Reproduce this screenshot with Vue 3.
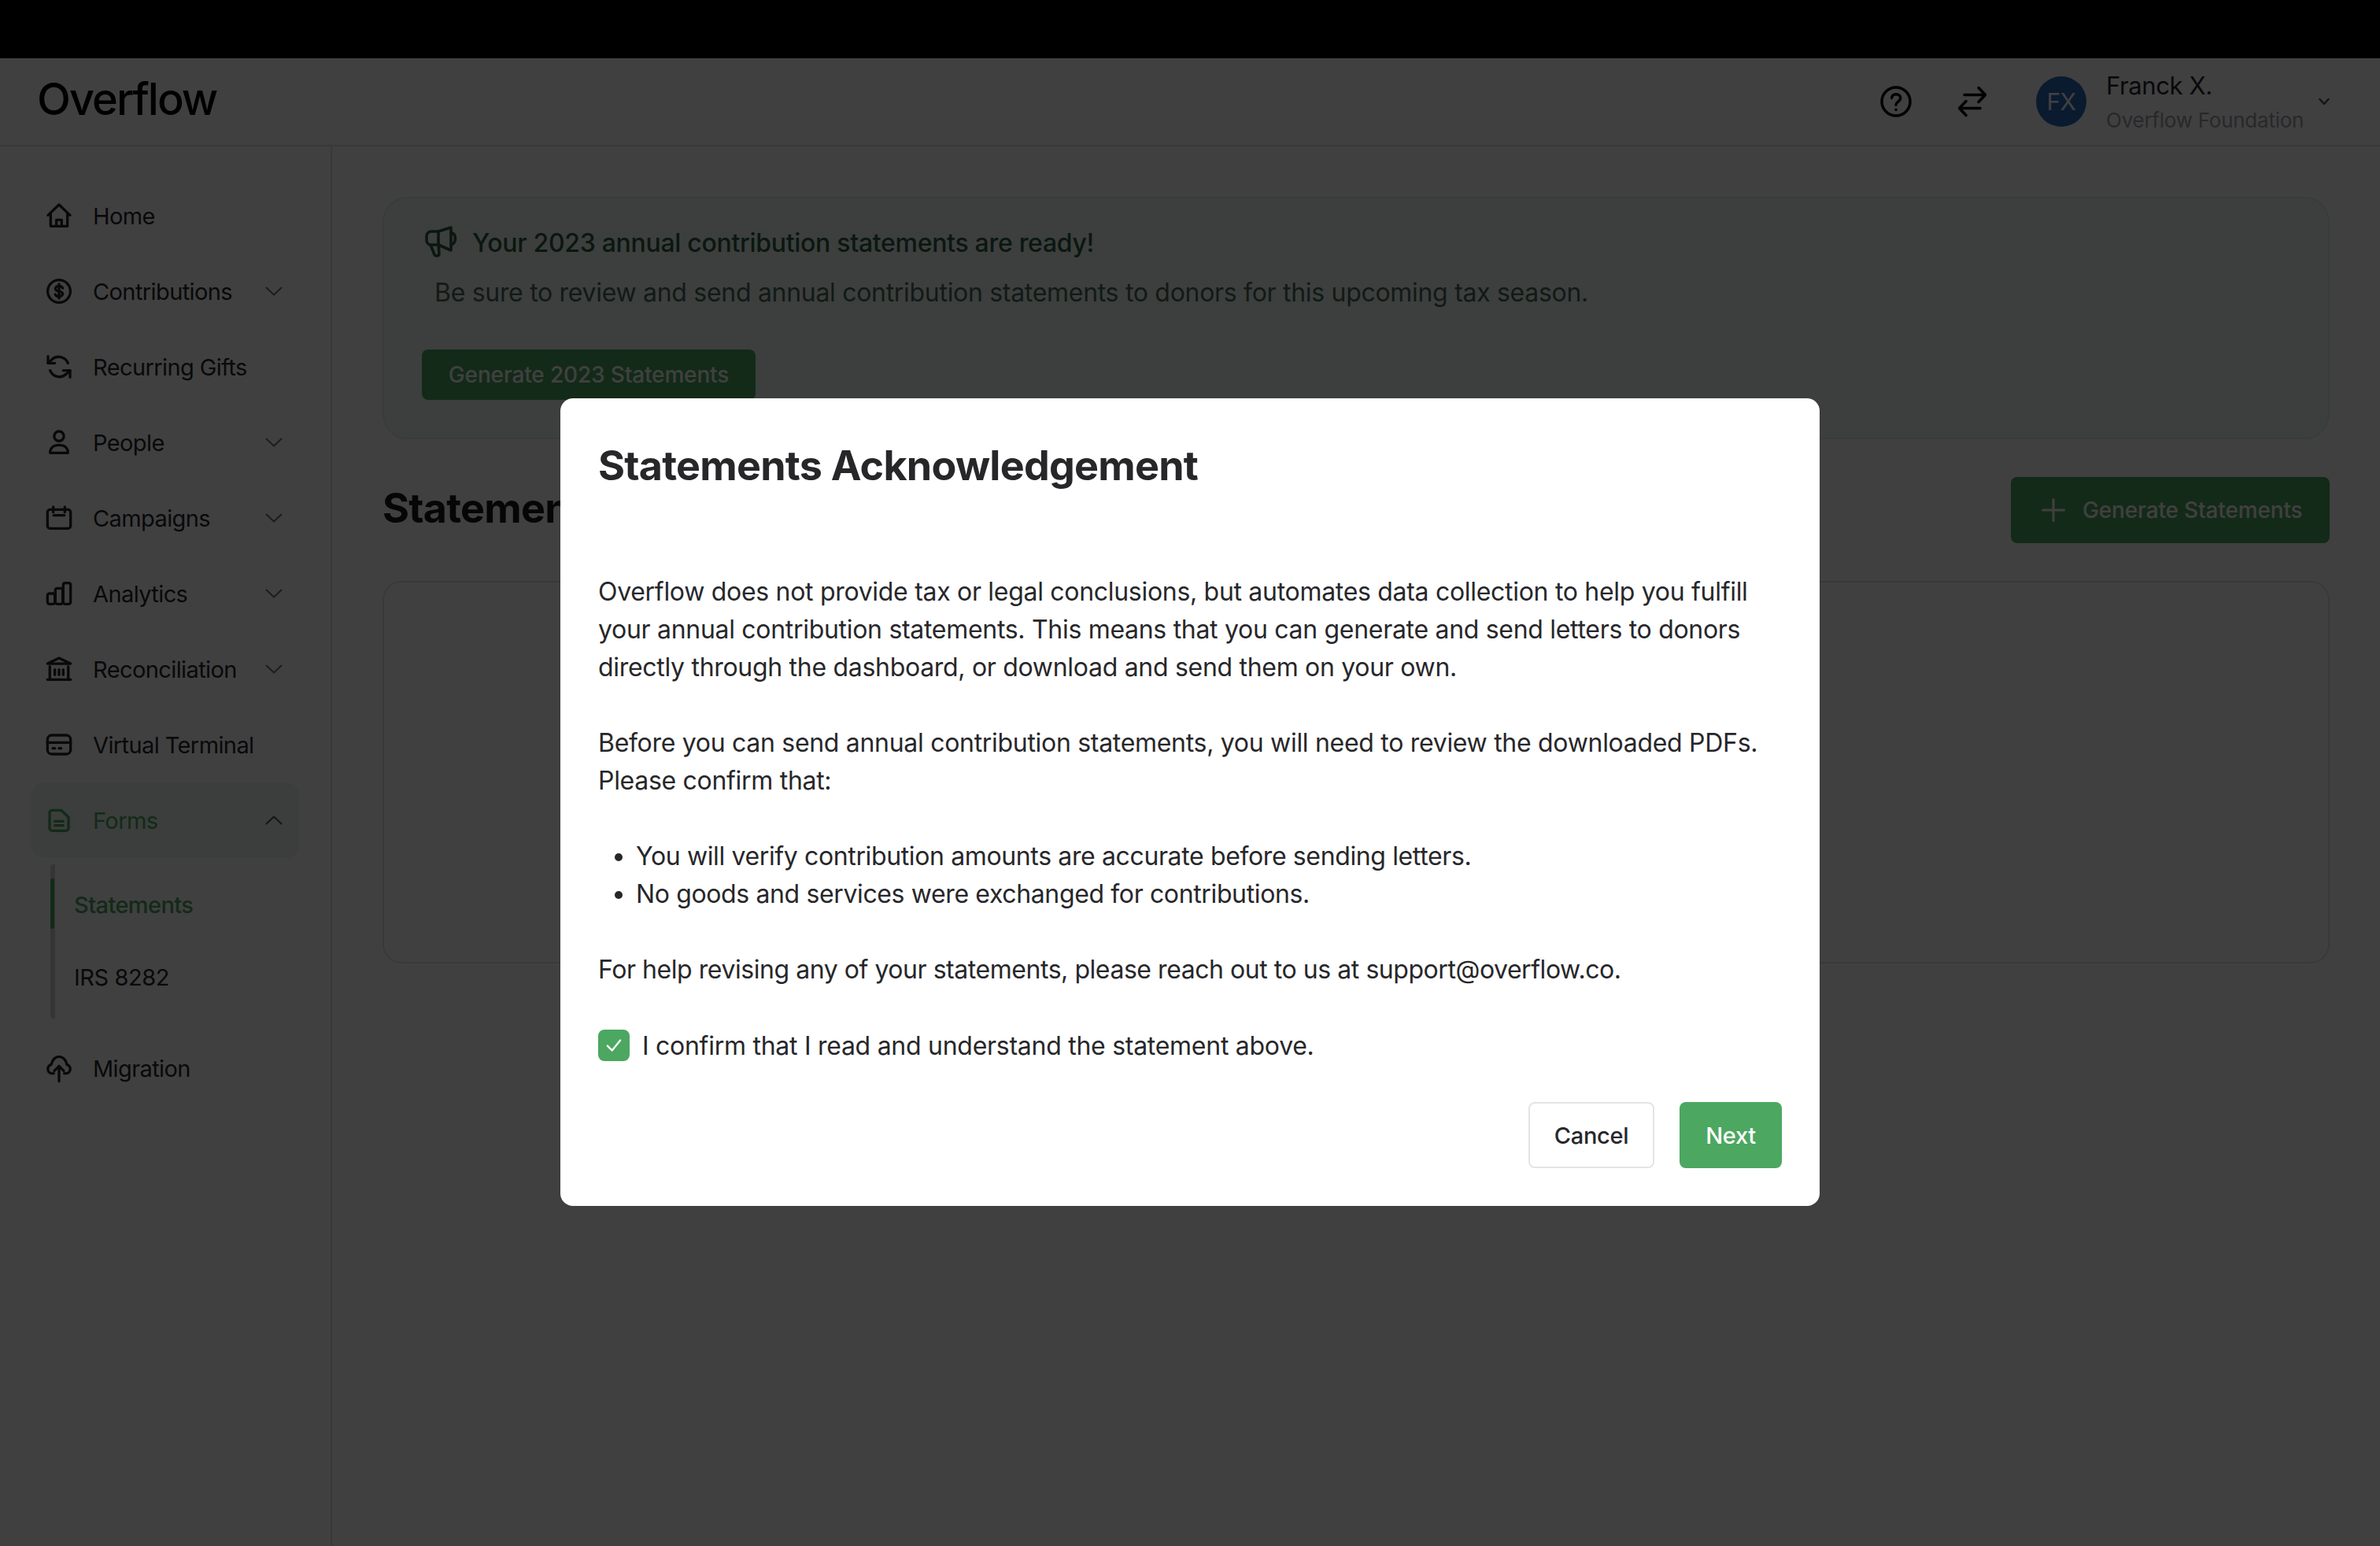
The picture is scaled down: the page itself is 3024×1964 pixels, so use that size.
<script setup>
const rr = (x, y, w, h, r) =>
  `M${x + r} ${y}H${x + w - r}a${r} ${r} 0 0 1 ${r} ${r}V${y + h - r}a${r} ${r} 0 0 1 -${r} ${r}H${x + r}a${r} ${r} 0 0 1 -${r} -${r}V${y + r}a${r} ${r} 0 0 1 ${r} -${r}Z`

const icons = {
  home: ['M1.500 11.500 12 1.500l10.500 10', 'M4 9.500V22h16V9.500', 'M9.500 22v-6h5v6'],
  dollar: ['M12 1.200a10.800 10.800 0 1 0 0 21.600a10.800 10.800 0 1 0 0-21.600Z', 'M15.500 9c-.6-1.300-2-2-3.500-2-2 0-3.500 1-3.500 2.500 0 3.400 7 1.600 7 5 0 1.500-1.600 2.500-3.500 2.500-1.600 0-3-.7-3.600-2', 'M12 5.200v13.600'],
  recurring: ['M1.500 2v6.500H8', 'M22.500 22v-6.500H16', 'M20.500 8.500A9.500 9.500 0 0 0 5 5.200L1.500 8.500', 'M22.500 15.500 19 18.800a9.500 9.500 0 0 1-15.500-3.300'],
  user: ['M12 1.500a4.600 4.600 0 1 0 0 9.200a4.600 4.600 0 1 0 0-9.200Z', 'M3.500 22c0-5 3.500-7.500 8.500-7.500s8.500 2.500 8.500 7.500Z'],
  calendar: [rr(1, 4, 22, 18, 2.5), 'M6.500 1.500v5', 'M17.500 1.500v5', 'M7 9.500h10'],
  analytics: [rr(1, 12, 7, 10, 1.8), rr(8.5, 7, 7, 15, 1.8), rr(16, 2, 7, 20, 1.8)],
  bank: ['M1 6.800 12 1.500l11 5.300Z', 'M3.200 9.500V21', 'M20.800 9.500V21', 'M1 22h22', 'M8 12.500v5', 'M12 12.500v5', 'M16 12.500v5'],
  card: [rr(1, 3, 22, 18, 4), 'M1 10h22', 'M6 15.500h2', 'M12 15.500h2'],
  doc: ['M3 5a2.500 2.500 0 0 1 2.500-2.500H14l7 6.500V19.500a2.500 2.500 0 0 1-2.500 2.500h-13A2.500 2.500 0 0 1 3 19.500Z', 'M8 13h8', 'M8 17h8'],
  cloud: ['M7 17H5C.5 16.500 0 10 4.500 8.500 6 3.500 9 1 12 1s6.500 2.500 7.500 7.500c4.500 1.500 4 8-.5 8.500H17', 'M12 24.500V10', 'M7.500 14.500 12 10l4.500 4.500'],
}

const nav = [
  { label: 'Home', icon: 'home' },
  { label: 'Contributions', icon: 'dollar', chevron: true },
  { label: 'Recurring Gifts', icon: 'recurring' },
  { label: 'People', icon: 'user', chevron: true },
  { label: 'Campaigns', icon: 'calendar', chevron: true },
  { label: 'Analytics', icon: 'analytics', chevron: true },
  { label: 'Reconciliation', icon: 'bank', chevron: true },
  { label: 'Virtual Terminal', icon: 'card' },
  { label: 'Forms', icon: 'doc', chevron: true, open: true },
]
</script>

<template>
  <div class="page">
    <div class="topbar"></div>
    <header class="header">
      <div class="logo">Overflow</div>
      <div class="account">
        <svg class="help" viewBox="0 0 40 40" fill="none" stroke="currentColor" stroke-width="3.500" stroke-linecap="round" stroke-linejoin="round">
          <circle cx="20" cy="20" r="18" />
          <path d="M14.500 15.500c.5-3 2.800-4.700 5.700-4.700 3.200 0 5.500 2 5.500 4.800 0 4.400-5.700 4.600-5.700 8.600" />
          <path d="M20 30.200v.3" />
        </svg>
        <svg class="swap" viewBox="0 0 36 40" fill="none" stroke="currentColor" stroke-width="3.500" stroke-linecap="round" stroke-linejoin="round">
          <path d="M8 11.500h26" />
          <path d="M26 2.500l8.500 9-8.500 9" />
          <path d="M28 28.500H2" />
          <path d="M10 19.500l-8.500 9 8.500 9" />
        </svg>
        <div class="avatar">FX</div>
        <div class="who">
          <div class="name">Franck X.</div>
          <div class="org">Overflow Foundation</div>
        </div>
        <svg class="account-chevron" viewBox="0 0 14 10" fill="none" stroke="currentColor" stroke-width="2.500" stroke-linecap="round" stroke-linejoin="round">
          <path d="M1.500 2 7 8l5.500-6" />
        </svg>
      </div>
    </header>

    <div class="body">
      <aside class="sidebar">
        <template v-for="item in nav" :key="item.label">
          <div class="nav-item" :class="{ active: item.open }">
            <svg class="nav-icon" viewBox="0 0 24 24" fill="none" stroke="currentColor" stroke-width="2.500" stroke-linecap="round" stroke-linejoin="round">
              <path v-for="d in icons[item.icon]" :key="d" :d="d" />
            </svg>
            <span class="nav-label">{{ item.label }}</span>
            <svg v-if="item.chevron" class="chevron" :class="{ up: item.open }" viewBox="0 0 22 12" fill="none" stroke="currentColor" stroke-width="2" stroke-linecap="round" stroke-linejoin="round">
              <path d="M1.500 1.500 11 10.500l9.500-9" />
            </svg>
          </div>
        </template>
        <div class="submenu">
          <div class="sub-item current">Statements</div>
          <div class="sub-item">IRS 8282</div>
        </div>
        <div class="nav-item">
          <svg class="nav-icon" viewBox="0 0 24 24" fill="none" stroke="currentColor" stroke-width="2.500" stroke-linecap="round" stroke-linejoin="round">
            <path v-for="d in icons.cloud" :key="d" :d="d" />
          </svg>
          <span class="nav-label">Migration</span>
        </div>
      </aside>

      <main class="main">
        <section class="banner">
          <div class="banner-title">
            <svg class="megaphone" viewBox="0 0 40 40" fill="none" stroke="currentColor" stroke-width="3.600" stroke-linecap="round" stroke-linejoin="round">
              <path d="M17 7H8a6 6 0 0 0-6 6v5c0 3.500 2.500 6 5.500 6H17Z" />
              <path d="M17 7 33 2v29L17 24" />
              <path d="M7 24l5 12.500c1 2.200 5.500 1.800 6-.5l-.8-11" />
              <path d="M34.500 9c5 2 5.500 11 0 14.500" />
            </svg>
            <span>Your 2023 annual contribution statements are ready!</span>
          </div>
          <p class="banner-text">Be sure to review and send annual contribution statements to donors for this upcoming tax season.</p>
          <button class="primary banner-btn">Generate 2023 Statements</button>
        </section>

        <div class="title-row">
          <h1 class="page-title">Statements</h1>
          <button class="primary generate">
            <svg class="plus" viewBox="0 0 30 30" fill="none" stroke="currentColor" stroke-width="3" stroke-linecap="round">
              <path d="M15 1.500v27" />
              <path d="M1.500 15h27" />
            </svg>
            Generate Statements
          </button>
        </div>

        <section class="table-card"></section>
      </main>
    </div>

    <div class="overlay">
      <div class="modal">
        <h2 class="modal-title">Statements Acknowledgement</h2>
        <div class="modal-body">
          <p>Overflow does not provide tax or legal conclusions, but automates data collection to help you fulfill your annual contribution statements. This means that you can generate and send letters to donors directly through the dashboard, or download and send them on your own.</p>
          <p>Before you can send annual contribution statements, you will need to review the downloaded PDFs.<br />Please confirm that:</p>
          <ul>
            <li>You will verify contribution amounts are accurate before sending letters.</li>
            <li>No goods and services were exchanged for contributions.</li>
          </ul>
          <p class="help-line">For help revising any of your statements, please reach out to us at support@overflow.co.</p>
        </div>
        <label class="confirm">
          <span class="checkbox">
            <svg viewBox="0 0 24 24" fill="none" stroke="#fff" stroke-width="2" stroke-linecap="round" stroke-linejoin="round">
              <path d="M5 12.500l5 5L19 6.500" />
            </svg>
          </span>
          I confirm that I read and understand the statement above.
        </label>
        <div class="actions">
          <button class="cancel">Cancel</button>
          <button class="next">Next</button>
        </div>
      </div>
    </div>
  </div>
</template>

<style>
html, body { margin: 0; background: #fff; }
</style>

<style scoped>
.page {
  position: relative;
  display: flex;
  flex-direction: column;
  height: 1964px;
  overflow: hidden;
  font-family: Inter, "Liberation Sans", sans-serif;
  color: #27272a;
  background: #fff;
}
.topbar { height: 74px; background: #000; flex: none; }
.header {
  flex: none;
  box-sizing: border-box;
  height: 112px;
  border-bottom: 2px solid #e4e4e7;
  display: flex;
  align-items: center;
  justify-content: space-between;
  padding: 0 64px 0 47px;
}
.logo {
  font-size: 56px;
  line-height: 64px;
  font-weight: 500;
  letter-spacing: -2px;
  color: #000;
  margin-top: -6px;
}
.account { display: flex; align-items: center; color: #000; }
.help { width: 40px; height: 40px; }
.swap { width: 36px; height: 40px; margin-left: 59px; }
.avatar {
  width: 64px;
  height: 64px;
  margin-left: 63px;
  border-radius: 50%;
  background: #2a68bc;
  color: #fff;
  font-size: 30px;
  display: flex;
  align-items: center;
  justify-content: center;
  letter-spacing: -.5px;
}
.who { margin-left: 25px; width: 270px; padding-top: 4px; }
.name { font-size: 31px; line-height: 44px; color: #27272a; letter-spacing: -.4px; }
.org { font-size: 26px; line-height: 44px; color: #a1a1aa; letter-spacing: -.25px; }
.account-chevron { width: 14px; height: 10px; color: #52525b; }
.body { flex: 1; display: flex; min-height: 0; }
.sidebar {
  flex: none;
  box-sizing: border-box;
  width: 422px;
  border-right: 2px solid #e4e4e7;
  padding: 40px 40px 0 40px;
}
.nav-item {
  height: 96px;
  display: flex;
  align-items: center;
  padding-left: 19px;
  border-radius: 16px;
  position: relative;
}
.nav-item.active { background: #ecf5f0; color: #4ca760; }
.nav-icon { width: 32px; height: 32px; flex: none; overflow: visible; }
.nav-label { margin-left: 27px; font-size: 29px; letter-spacing: -.6px; white-space: nowrap; }
.chevron { position: absolute; left: 297px; width: 22px; height: 12px; color: #71717a; }
.active .chevron { color: #52525b; }
.chevron.up { transform: rotate(180deg); }
.submenu {
  position: relative;
  box-sizing: border-box;
  margin: 8px 0 15px 24px;
  height: 196px;
  border-left: 6px solid #d4d4d8;
  border-radius: 4px;
  padding: 20px 0 0 24px;
  display: flex;
  flex-direction: column;
  gap: 28px;
}
.sub-item {
  position: relative;
  height: 64px;
  line-height: 64px;
  font-size: 29px;
  letter-spacing: -.45px;
}
.sub-item.current { color: #4ca760; font-weight: 500; letter-spacing: -.6px; }
.sub-item.current::before {
  content: "";
  position: absolute;
  left: -30px;
  top: -2px;
  width: 5px;
  height: 64px;
  border-radius: 3px;
  background: #4ca760;
}
.main { flex: 1; min-width: 0; padding: 64px; }
.banner {
  box-sizing: border-box;
  height: 308px;
  padding: 32px 48px 48px;
  border: 2px solid #dfeeea;
  border-radius: 32px;
  background: #f0fbf7;
}
.banner-title {
  display: flex;
  align-items: center;
  height: 48px;
  color: #2f5c40;
  font-size: 32px;
  font-weight: 500;
  letter-spacing: -.3px;
  padding-left: 4px;
}
.megaphone { width: 40px; height: 40px; margin-right: 20px; margin-top: -2px; overflow: visible; }
.banner-text {
  margin: 16px 0 48px 16px;
  font-size: 32px;
  line-height: 48px;
  color: #4a6a58;
  letter-spacing: -.3px;
  white-space: nowrap;
}
button {
  font-family: inherit;
  border: none;
  cursor: pointer;
  padding: 0;
}
.primary {
  background: #4ca760;
  color: #fff;
  border-radius: 8px;
  font-size: 28px;
  font-weight: 500;
  letter-spacing: -.15px;
}
.banner-btn { display: block; width: 424px; height: 64px; }
.title-row {
  display: flex;
  align-items: center;
  justify-content: space-between;
  margin-top: 48px;
}
.page-title { margin: -4px 0 0; font-size: 52px; line-height: 76px; font-weight: 700; color: #18181b; letter-spacing: -.75px; }
.generate {
  width: 405px;
  height: 84px;
  display: flex;
  align-items: center;
  padding-left: 39px;
  box-sizing: border-box;
}
.plus { width: 30px; height: 30px; margin-right: 22px; }
.table-card {
  box-sizing: border-box;
  margin-top: 48px;
  height: 486px;
  border: 2px solid #e4e4e7;
  border-radius: 24px;
}
.overlay {
  position: absolute;
  top: 74px;
  left: 0;
  right: 0;
  bottom: 0;
  background: rgba(0, 0, 0, .75);
  display: flex;
  align-items: center;
  justify-content: center;
}
.modal {
  box-sizing: border-box;
  width: 1600px;
  height: 1026px;
  padding: 48px;
  background: #fff;
  border-radius: 16px;
  color: #27272a;
}
.modal-title {
  margin: 0 0 98px;
  font-size: 52px;
  line-height: 76px;
  font-weight: 700;
  letter-spacing: -.75px;
}
.modal-body { font-size: 32px; line-height: 48px; letter-spacing: -.3px; }
.modal-body p { margin: 0 0 48px; }
.modal-body ul { margin: 0 0 48px; padding-left: 48px; letter-spacing: -.37px; }
.modal-body .help-line { letter-spacing: -.45px; }
.confirm {
  display: flex;
  align-items: center;
  height: 48px;
  font-size: 32px;
  letter-spacing: -.27px;
}
.checkbox {
  width: 40px;
  height: 40px;
  border-radius: 8px;
  background: #4ca760;
  margin-right: 16px;
  display: flex;
  align-items: center;
  justify-content: center;
}
.checkbox svg { width: 28px; height: 28px; }
.actions {
  margin-top: 48px;
  display: flex;
  justify-content: flex-end;
  gap: 32px;
}
.cancel, .next {
  height: 84px;
  border-radius: 8px;
  font-size: 29px;
  font-weight: 500;
  letter-spacing: -.3px;
}
.cancel { width: 160px; background: #fff; border: 2px solid #e4e4e7; color: #27272a; }
.next { width: 130px; background: #4ca760; color: #fff; }
</style>
